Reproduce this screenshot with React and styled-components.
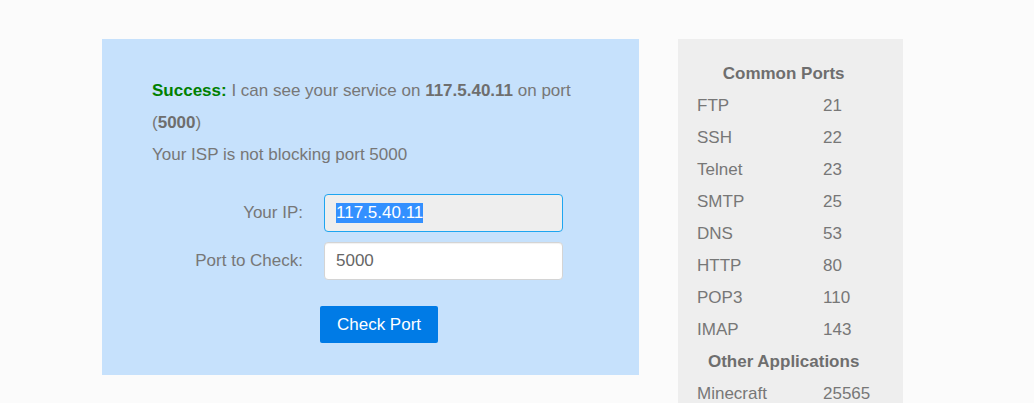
import React from "react";
import styled, { createGlobalStyle } from "styled-components";

const commonPorts = [
  ["FTP", "21"],
  ["SSH", "22"],
  ["Telnet", "23"],
  ["SMTP", "25"],
  ["DNS", "53"],
  ["HTTP", "80"],
  ["POP3", "110"],
  ["IMAP", "143"],
];

const otherApps = [["Minecraft", "25565"]];

const App = () => {
  return (
    <>
      <GlobalStyle />
      <Page>
        <CheckPanel>
          <Message>
            <Success>Success:</Success> I can see your service on{" "}
            <b>117.5.40.11</b> on port (<b>5000</b>)
          </Message>
          <Message>Your ISP is not blocking port 5000</Message>

          <Form>
            <Label>Your IP:</Label>
            <Field $focused>
              <Selected>117.5.40.11</Selected>
            </Field>
            <Label>Port to Check:</Label>
            <Field>5000</Field>
          </Form>

          <ButtonRow>
            <CheckButton>Check Port</CheckButton>
          </ButtonRow>
        </CheckPanel>

        <Sidebar>
          <PortTable>
            <TableHeading>Common Ports</TableHeading>
            {commonPorts.map(([name, port]) => (
              <React.Fragment key={name}>
                <Cell>{name}</Cell>
                <Cell>{port}</Cell>
              </React.Fragment>
            ))}
            <TableHeading>Other Applications</TableHeading>
            {otherApps.map(([name, port]) => (
              <React.Fragment key={name}>
                <Cell>{name}</Cell>
                <Cell>{port}</Cell>
              </React.Fragment>
            ))}
          </PortTable>
        </Sidebar>
      </Page>
    </>
  );
};

export default App;

const GlobalStyle = createGlobalStyle`
  html, body {
    margin: 0;
    background: #fbfbfb;
    font-family: "Liberation Sans", Arial, sans-serif;
    font-size: 17px;
    color: #777777;
  }
`;

const Page = styled.div`
  display: flex;
  align-items: flex-start;
  gap: 39px;
  padding: 39px 0 0 102px;
  height: 403px;
  box-sizing: border-box;
  overflow: hidden;
`;

const CheckPanel = styled.div`
  width: 537px;
  box-sizing: border-box;
  padding: 36px 50px 32px;
  background: #c6e1fc;
`;

const Message = styled.p`
  margin: 0;
  line-height: 32px;
  b {
    color: #6e6e6e;
  }
`;

const Success = styled.b`
  && {
    color: #008000;
  }
`;

const Form = styled.div`
  display: grid;
  grid-template-columns: 151px 239px;
  column-gap: 21px;
  row-gap: 10px;
  align-items: center;
  margin-top: 23px;
`;

const Label = styled.label`
  text-align: right;
`;

const Field = styled.div`
  height: 38px;
  box-sizing: border-box;
  display: flex;
  align-items: center;
  padding: 0 11px;
  border-radius: 4px;
  border: 1px solid ${({ $focused }) => ($focused ? "#1ea5f0" : "#d4d4d4")};
  background: ${({ $focused }) => ($focused ? "#eeeeee" : "#ffffff")};
  color: #666666;
  box-shadow: ${({ $focused }) =>
    $focused ? "none" : "inset 0 1px 1px rgba(0, 0, 0, 0.06)"};
`;

const Selected = styled.span`
  background: #3390ff;
  color: #ffffff;
  line-height: 20px;
`;

const ButtonRow = styled.div`
  display: flex;
  padding-left: 168px;
  margin-top: 26px;
`;

const CheckButton = styled.button`
  width: 118px;
  height: 37px;
  border: none;
  border-radius: 2px;
  background: #007be6;
  color: #ffffff;
  font-family: inherit;
  font-size: 17px;
  cursor: pointer;
`;

const Sidebar = styled.div`
  width: 225px;
  min-height: 400px;
  box-sizing: border-box;
  padding: 19px 0 0 19px;
  background: #eeeeee;
`;

const PortTable = styled.div`
  display: inline-grid;
  grid-template-columns: 126px auto;
  line-height: 32px;
`;

const TableHeading = styled.div`
  grid-column: 1 / -1;
  text-align: center;
  font-weight: bold;
  color: #6e6e6e;
`;

const Cell = styled.div``;
